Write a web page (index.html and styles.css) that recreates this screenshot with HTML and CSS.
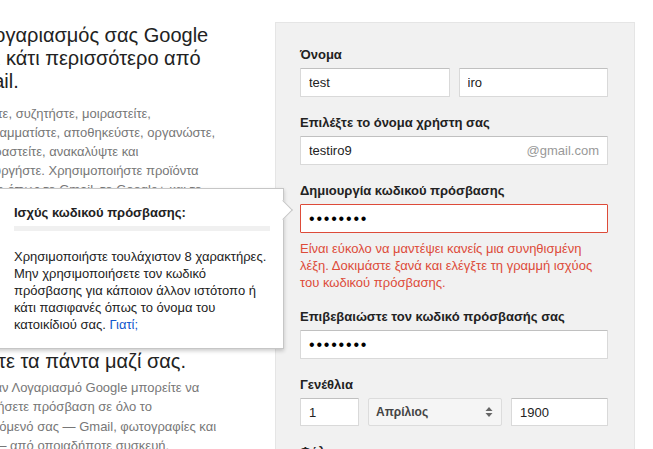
FILE: index.html
```html
<!DOCTYPE html>
<html lang="el">
<head>
<meta charset="utf-8">
<title>Δημιουργία Λογαριασμού Google</title>
<link rel="stylesheet" href="styles.css">
</head>
<body>
<main class="page">
  <section class="intro">
    <h1>Ο Λογαριασμός σας Google είναι κάτι περισσότερο από Gmail.</h1>
    <p>Μιλήστε, συζητήστε, μοιραστείτε, προγραμματίστε, αποθηκεύστε, οργανώστε, ξεκουραστείτε, ανακαλύψτε και δημιουργήστε. Χρησιμοποιήστε προϊόντα Google όπως το Gmail, το Google+ και το YouTube με ένα όνομα χρήστη.</p>
    <h2 class="second">Πάρτε τα πάντα μαζί σας.</h2>
    <p class="tight">Με έναν Λογαριασμό Google μπορείτε να αποκτήσετε πρόσβαση σε όλο το περιεχόμενό σας — Gmail, φωτογραφίες και άλλα — από οποιαδήποτε συσκευή.</p>
  </section>

  <form class="panel">
    <div class="field">
      <label class="label">Όνομα</label>
      <div class="name-row">
        <input class="input" type="text" value="test">
        <input class="input" type="text" value="iro">
      </div>
    </div>

    <div class="field">
      <label class="label">Επιλέξτε το όνομα χρήστη σας</label>
      <div class="input suffix-box">
        <input class="bare" type="text" value="testiro9">
        <span class="suffix">@gmail.com</span>
      </div>
    </div>

    <div class="field">
      <label class="label">Δημιουργία κωδικού πρόσβασης</label>
      <input class="input input-error password" type="password" value="abcdefgh">
      <p class="error">Είναι εύκολο να μαντέψει κανείς μια συνηθισμένη λέξη. Δοκιμάστε ξανά και ελέγξτε τη γραμμή ισχύος του κωδικού πρόσβασης.</p>
    </div>

    <div class="field">
      <label class="label">Επιβεβαιώστε τον κωδικό πρόσβασής σας</label>
      <input class="input password" type="password" value="abcdefgh">
    </div>

    <div class="field">
      <label class="label">Γενέθλια</label>
      <div class="birth-row">
        <input class="input" type="text" value="1">
        <div class="select">
          <span>Απρίλιος</span>
          <svg width="8" height="12" viewBox="0 0 8 12" aria-hidden="true"><path d="M4 1 L7.5 5 H0.5 Z M4 11 L7.5 7 H0.5 Z" fill="#666"/></svg>
        </div>
        <input class="input" type="text" value="1900">
      </div>
    </div>

    <div class="field">
      <label class="label">Φύλο</label>
    </div>
  </form>

  <div class="tooltip">
    <div class="tooltip-title">Ισχύς κωδικού πρόσβασης:</div>
    <div class="strength-bar"></div>
    <p class="tooltip-text">Χρησιμοποιήστε τουλάχιστον 8 χαρακτήρες. Μην χρησιμοποιήσετε τον κωδικό πρόσβασης για κάποιον άλλον ιστότοπο ή κάτι πασιφανές όπως το όνομα του κατοικίδιού σας. <a href="#" class="link">Γιατί;</a></p>
  </div>
</main>
</body>
</html>
```
FILE: styles.css
```css
* {
  box-sizing: border-box;
}

html,
body {
  margin: 0;
  padding: 0;
  overflow: hidden;
  background: #fff;
}

body {
  font-family: "Liberation Sans", Arial, sans-serif;
  font-size: 13px;
  color: #222;
}

.page {
  position: relative;
  display: flex;
  gap: 55px;
  width: 653px;
  height: 449px;
}

/* left column */
.intro {
  flex: 0 0 258px;
  margin-left: -38px;
  padding-top: 24px;
}

.intro h1,
.intro h2 {
  margin: 0 -30px 0 -1px;
  font-size: 20px;
  font-weight: normal;
  line-height: 23px;
  color: #222;
}

.intro p {
  margin: 11px 0 0;
  font-size: 13px;
  line-height: 19px;
  color: #777;
}

.intro .second {
  margin-top: 132px;
}

.intro .tight {
  margin-top: 5px;
  line-height: 19.3px;
}

/* form panel */
.panel {
  flex: 0 0 360px;
  align-self: flex-start;
  min-height: 470px;
  margin: 22px 0 0;
  padding: 24px 26px 0 24px;
  background: #f1f1f1;
  border: 1px solid #e5e5e5;
}

.field + .field {
  margin-top: 18px;
}

.label {
  display: block;
  margin-bottom: 5px;
  font-weight: bold;
  line-height: 16px;
  color: #222;
}

.input {
  display: block;
  width: 100%;
  height: 29px;
  margin: 0;
  padding: 0 8px;
  font-family: inherit;
  font-size: 13px;
  color: #222;
  background: #fff;
  border: 1px solid #d9d9d9;
  border-top-color: #c0c0c0;
  border-radius: 1px;
  outline: none;
}

.input-error {
  border-color: #dd4b39;
}

.password {
  font-size: 16px;
  letter-spacing: 1.8px;
  color: #000;
}

.name-row {
  display: grid;
  grid-template-columns: 1fr 1fr;
  gap: 9px;
}

.suffix-box {
  display: flex;
  align-items: center;
  padding-right: 8px;
}

.bare {
  flex: 1;
  min-width: 0;
  height: 100%;
  padding: 0;
  font-family: inherit;
  font-size: 13px;
  color: #222;
  background: transparent;
  border: 0;
  outline: none;
}

.suffix {
  color: #999;
}

.error {
  margin: 7px 0 0;
  line-height: 17px;
  color: #dd4b39;
}

.birth-row {
  display: grid;
  grid-template-columns: 59px 134px 1fr;
  gap: 9px;
}

.birth-row .input,
.birth-row .select {
  height: 28px;
}

.select {
  display: flex;
  align-items: center;
  justify-content: space-between;
  height: 29px;
  padding: 0 8px 0 7px;
  font-size: 12px;
  font-weight: bold;
  color: #444;
  background: #f5f5f5;
  border: 1px solid #dcdcdc;
  border-radius: 2px;
}

/* tooltip */
.tooltip {
  position: absolute;
  top: 188px;
  left: -20px;
  width: 304px;
  height: 161px;
  padding: 16px 13px 0 33px;
  background: #fff;
  border: 1px solid #c6c6c6;
  box-shadow: 0 2px 4px rgba(0, 0, 0, 0.2);
  z-index: 2;
}

.tooltip::after {
  content: "";
  position: absolute;
  top: 14px;
  right: -7px;
  width: 13px;
  height: 13px;
  background: #fff;
  border-top: 1px solid #c6c6c6;
  border-right: 1px solid #c6c6c6;
  transform: rotate(45deg);
}

.tooltip-title {
  font-weight: bold;
  line-height: 16px;
  color: #222;
}

.strength-bar {
  height: 5px;
  margin-top: 5px;
  background: #f0f0f0;
}

.tooltip-text {
  margin: 17px 0 0;
  line-height: 17px;
  color: #222;
}

.link {
  color: #15c;
  text-decoration: none;
}
```
